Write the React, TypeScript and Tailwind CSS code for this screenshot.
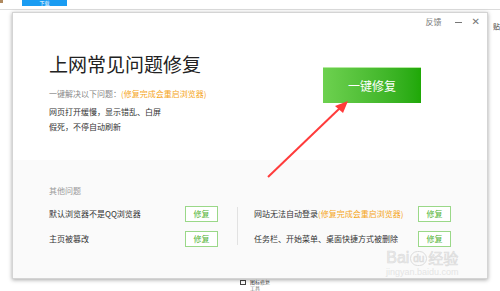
import React from "react";

const fontCls = "font-['Microsoft_YaHei','Noto_Sans_CJK_SC','Liberation_Sans',sans-serif]";

const FixButton = () => (
  <button className="w-[33px] h-[16px] border border-[#9ad888] bg-white text-[8px] leading-none text-[#52b334] flex items-center justify-center">
    修复
  </button>
);

const Row = ({ label, note, width }: { label: string; note?: string; width: string }) => (
  <div className="flex items-center h-[16px]">
    <div className={`${width} text-[8px] leading-none text-[#333] whitespace-nowrap`}>
      {label}
      {note && <span className="text-[#f5a623]">{note}</span>}
    </div>
    <FixButton />
  </div>
);

const Arrow = () => (
  <svg className="absolute left-0 top-0 pointer-events-none" width="500" height="291" viewBox="0 0 500 291">
    <line x1="268" y1="177" x2="340" y2="108" stroke="#ff3b3b" strokeWidth="2" />
    <polygon points="348,101 335,106 343,113" fill="#ff3b3b" />
  </svg>
);

export default function App() {
  return (
    <div className={`relative w-[500px] h-[291px] overflow-hidden bg-white ${fontCls}`}>
      {/* page behind the dialog */}
      <div className="h-[10px] border-b border-[#dcdcdc] flex">
        <div className="w-[3px] h-[3px] bg-[#b08a60] mt-0" />
        <div className="ml-[19px] w-[45px] h-[6px] bg-[#1a9cf2] text-white text-[5px] leading-[6px] text-center">
          下载
        </div>
      </div>

      <div className="flex">
        {/* dialog */}
        <div className="relative mt-[2px] ml-[12px] w-[476px] h-[267px] bg-white border border-[#d4d4d4] shadow-[0_1px_4px_rgba(0,0,0,0.35)] flex flex-col">
          {/* header */}
          <div className="h-[18px] flex items-center justify-end pr-[7px] text-[#777]">
            <span className="text-[8px] leading-none">反馈</span>
            <span className="ml-[13px] w-[7px] h-px bg-[#777]" />
            <span className="ml-[10px] text-[10px] leading-none font-['DejaVu_Sans',sans-serif]">✕</span>
          </div>

          {/* main section */}
          <div className="h-[129px] pl-[36px] pt-[23px] flex">
            <div className="w-[274px]">
              <div className="text-[19px] leading-[19px] text-[#222]">上网常见问题修复</div>
              <div className="mt-[15px] text-[8px] leading-[12px] text-[#888] whitespace-nowrap">
                一键解决以下问题：<span className="text-[#f5a623]">(修复完成会重启浏览器)</span>
              </div>
              <div className="mt-[4px] text-[8px] leading-[15px] text-[#333]">
                <div>网页打开缓慢，显示错乱、白屏</div>
                <div>假死，不停自动刷新</div>
              </div>
            </div>
            <div className="pt-[13px]">
              <button className="w-[98px] h-[36px] bg-linear-to-r from-[#6dd14f] to-[#1fa806] border-t border-[#b3ea9e] text-white text-[12px] leading-none flex items-center justify-center">
                一键修复
              </button>
            </div>
          </div>

          {/* other issues */}
          <div className="flex-1 bg-[#fafafa] pl-[36px] pt-[25px]">
            <div className="text-[8px] leading-[12px] text-[#999]">其他问题</div>
            <div className="mt-[9px] flex">
              <div className="flex flex-col gap-[9px]">
                <Row label="默认浏览器不是QQ浏览器" width="w-[136px]" />
                <Row label="主页被篡改" width="w-[136px]" />
              </div>
              <div className="ml-[19px] mt-[1px] w-px h-[38px] bg-[#e2e2e2]" />
              <div className="ml-[16px] flex flex-col gap-[9px]">
                <Row label="网站无法自动登录" note="(修复完成会重启浏览器)" width="w-[164px]" />
                <Row label="任务栏、开始菜单、桌面快捷方式被删除" width="w-[164px]" />
              </div>
            </div>
          </div>

          {/* watermark */}
          <div className="absolute left-[373px] top-[237px] flex flex-col items-center text-[#ebebeb]">
            <div className="flex items-center text-[16px] leading-[16px] font-['Liberation_Sans',sans-serif] [-webkit-text-stroke:0.6px_#dcdcdc]">
              <span>Bai</span>
              <span className="mx-[1px] w-[17px] h-[15px] rounded-full border border-[#dcdcdc] text-[10px] leading-[13px] text-center">du</span>
              <span className={`text-[15px] ${fontCls}`}>经验</span>
            </div>
            <div className="mt-[2px] text-[9px] leading-[9px] font-['Liberation_Sans',sans-serif] text-[#e4e4e4]">
              jingyan.baidu.com
            </div>
          </div>
        </div>

        {/* page edge right of dialog */}
        <div className="ml-[5px] mt-[13px] text-[7px] leading-none text-[#333]">贴</div>
      </div>

      {/* page below the dialog */}
      <div className="flex items-start pl-[240px]">
        <div className="mt-[1px] w-[6px] h-[5px] border border-[#444]" />
        <div className="ml-[4px] text-[5px] leading-[5px] text-[#333]">
          <div>图标修复</div>
          <div className="mt-[1px] text-[#777]">工具</div>
        </div>
      </div>

      <Arrow />
    </div>
  );
}
